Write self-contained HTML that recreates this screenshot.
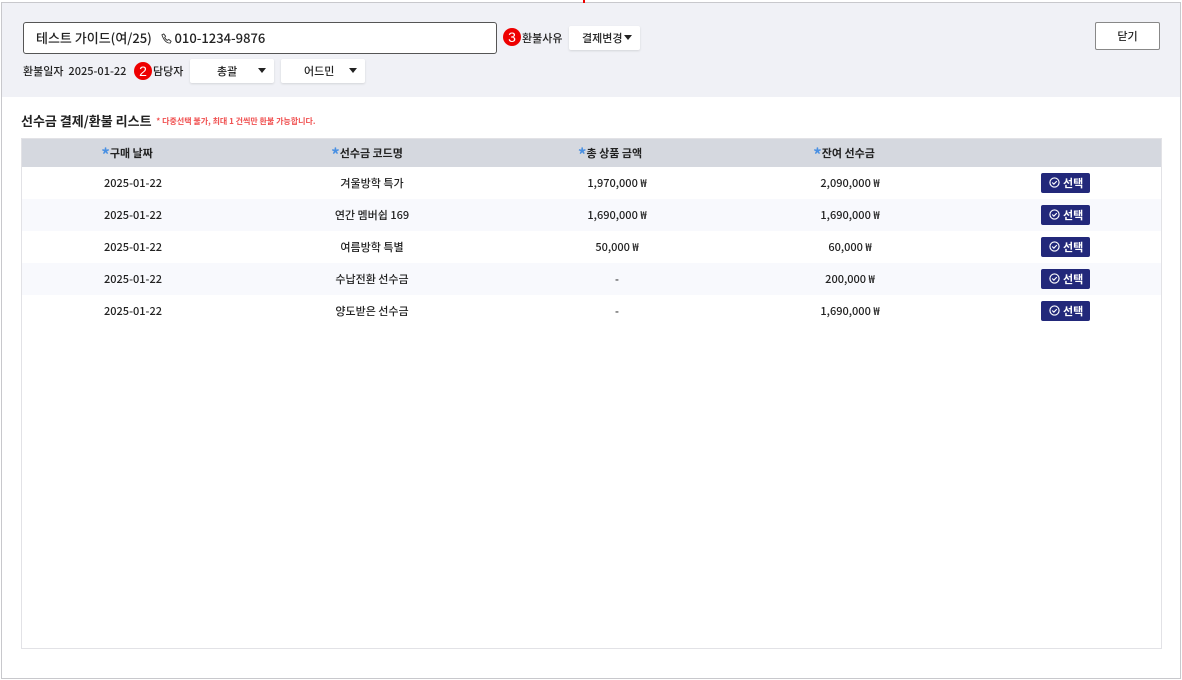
<!DOCTYPE html>
<html><head><meta charset="utf-8"><style>
*{box-sizing:border-box;margin:0;padding:0}
body{width:1182px;height:680px;background:#fff;font-family:"Noto Sans CJK KR","Liberation Sans",sans-serif;font-weight:500;color:#222;position:relative;overflow:hidden}
.frame{position:absolute;left:1px;top:2px;width:1180px;height:677px;border:1px solid #c8c8cc}
.band{position:absolute;left:2px;top:3px;width:1178px;height:94px;background:#f0f1f6}
.abs{position:absolute;line-height:14px}
.inp{left:23px;top:22px;width:474px;height:32px;border:1px solid #555;border-radius:3px;background:#fff;font-size:13px;line-height:30px !important;padding-left:12px}
.badge{width:18px;height:18px;border-radius:50%;background:#e00;color:#fff;font-size:14px;text-align:center;line-height:18px !important;font-family:"Liberation Sans",sans-serif}
.sel{background:#fff;border-radius:2px;box-shadow:0 1px 2px rgba(0,0,0,.12);font-size:11px;height:24px;line-height:24px !important}
.sel .ar{position:absolute;right:8px;top:9px;width:0;height:0;border-left:4px solid transparent;border-right:4px solid transparent;border-top:5px solid #222}
.lbl{font-size:11px}
.tbl{left:21px;top:138px;width:1141px;height:511px;border:1px solid #e2e2e6}
.hd{position:absolute;left:0;top:0;width:100%;height:28px;background:#d5d8df}
.row{position:absolute;left:0;width:100%;height:32px}
.c{position:absolute;transform:translateX(-50%);font-size:11px;white-space:nowrap;line-height:14px}
.btn{position:absolute;left:1019px;width:49px;height:20px;background:#22287a;border-radius:2px;color:#fff;font-size:11px;font-weight:bold;line-height:20px;padding-left:22px}
.btn svg{position:absolute;left:8px;top:4px}
.st{color:#4a90e2;font-size:17px;font-weight:bold;vertical-align:-4px;line-height:10px}
</style></head><body>
<div class="frame"></div>
<div class="band"></div>
<div class="abs" style="left:583px;top:0;width:2px;height:3px;background:#e00"></div>
<div class="abs inp">테스트 가이드(여/25) &nbsp; <svg width="11" height="11" viewBox="0 0 12 12" style="vertical-align:-1px"><path d="M3 1 L5 3.5 L4 5 Q5.5 7.5 7 8 L8.5 7 L11 9 L10 11 Q4 11 1 2 Z" fill="none" stroke="#333" stroke-width="1"/></svg> 010-1234-9876</div>
<div class="abs badge" style="left:503px;top:28px">3</div>
<div class="abs lbl" style="left:522px;top:31px">환불사유</div>
<div class="abs sel" style="left:569px;top:26px;width:71px;padding-left:13px">결제변경<span class="ar"></span></div>
<div class="abs" style="left:1095px;top:22px;width:65px;height:28px;border:1px solid #888;border-radius:2px;background:#fff;font-size:11px;text-align:center;line-height:26px">닫기</div>
<div class="abs lbl" style="left:23px;top:64px">환불일자 &nbsp;2025-01-22</div>
<div class="abs badge" style="left:134px;top:62px">2</div>
<div class="abs lbl" style="left:153px;top:64px">담당자</div>
<div class="abs sel" style="left:190px;top:59px;width:84px;padding-left:27px">총괄<span class="ar"></span></div>
<div class="abs sel" style="left:281px;top:59px;width:84px;padding-left:23px">어드민<span class="ar"></span></div>
<div class="abs" style="left:21px;top:114px;font-size:13px;font-weight:bold">선수금 결제/환불 리스트 <span style="color:#f05050;font-size:8px;font-weight:bold;vertical-align:2px">&nbsp;* 다중선택 불가, 최대 1 건씩만 환불 가능합니다.</span></div>
<div class="abs tbl">
<div class="hd">
<div class="c" style="left:105px;top:7px;font-weight:bold"><span class="st">*</span>구매 날짜</div>
<div class="c" style="left:345px;top:7px;font-weight:bold"><span class="st">*</span>선수금 코드명</div>
<div class="c" style="left:588px;top:7px;font-weight:bold"><span class="st">*</span>총 상품 금액</div>
<div class="c" style="left:822px;top:7px;font-weight:bold"><span class="st">*</span>잔여 선수금</div>
</div>
<div class="row" style="top:28px"><div class="c" style="left:111px;top:9px">2025-01-22</div><div class="c" style="left:350px;top:9px">겨울방학 특가</div><div class="c" style="left:595px;top:9px">1,970,000 ₩</div><div class="c" style="left:828px;top:9px">2,090,000 ₩</div><div class="btn" style="top:6px"><svg width="11" height="11" viewBox="0 0 12 12"><circle cx="6" cy="6" r="5" fill="none" stroke="#fff" stroke-width="1.3"/><path d="M3.5 6 L5.3 7.8 L8.5 4.5" fill="none" stroke="#fff" stroke-width="1.3"/></svg>선택</div></div>
<div class="row" style="top:60px;background:#f8f9fd"><div class="c" style="left:111px;top:9px">2025-01-22</div><div class="c" style="left:350px;top:9px">연간 멤버쉽 169</div><div class="c" style="left:595px;top:9px">1,690,000 ₩</div><div class="c" style="left:828px;top:9px">1,690,000 ₩</div><div class="btn" style="top:6px"><svg width="11" height="11" viewBox="0 0 12 12"><circle cx="6" cy="6" r="5" fill="none" stroke="#fff" stroke-width="1.3"/><path d="M3.5 6 L5.3 7.8 L8.5 4.5" fill="none" stroke="#fff" stroke-width="1.3"/></svg>선택</div></div>
<div class="row" style="top:92px"><div class="c" style="left:111px;top:9px">2025-01-22</div><div class="c" style="left:350px;top:9px">여름방학 특별</div><div class="c" style="left:595px;top:9px">50,000 ₩</div><div class="c" style="left:828px;top:9px">60,000 ₩</div><div class="btn" style="top:6px"><svg width="11" height="11" viewBox="0 0 12 12"><circle cx="6" cy="6" r="5" fill="none" stroke="#fff" stroke-width="1.3"/><path d="M3.5 6 L5.3 7.8 L8.5 4.5" fill="none" stroke="#fff" stroke-width="1.3"/></svg>선택</div></div>
<div class="row" style="top:124px;background:#f8f9fd"><div class="c" style="left:111px;top:9px">2025-01-22</div><div class="c" style="left:350px;top:9px">수납전환 선수금</div><div class="c" style="left:595px;top:9px">-</div><div class="c" style="left:828px;top:9px">200,000 ₩</div><div class="btn" style="top:6px"><svg width="11" height="11" viewBox="0 0 12 12"><circle cx="6" cy="6" r="5" fill="none" stroke="#fff" stroke-width="1.3"/><path d="M3.5 6 L5.3 7.8 L8.5 4.5" fill="none" stroke="#fff" stroke-width="1.3"/></svg>선택</div></div>
<div class="row" style="top:156px"><div class="c" style="left:111px;top:9px">2025-01-22</div><div class="c" style="left:350px;top:9px">양도받은 선수금</div><div class="c" style="left:595px;top:9px">-</div><div class="c" style="left:828px;top:9px">1,690,000 ₩</div><div class="btn" style="top:6px"><svg width="11" height="11" viewBox="0 0 12 12"><circle cx="6" cy="6" r="5" fill="none" stroke="#fff" stroke-width="1.3"/><path d="M3.5 6 L5.3 7.8 L8.5 4.5" fill="none" stroke="#fff" stroke-width="1.3"/></svg>선택</div></div>
</div>
</body></html>
